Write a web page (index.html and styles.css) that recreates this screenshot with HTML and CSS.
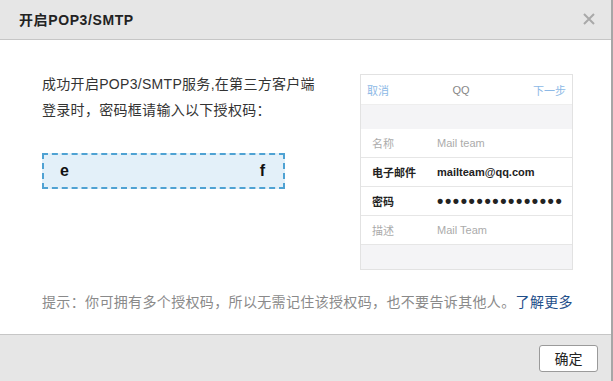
FILE: index.html
```
<!DOCTYPE html>
<html lang="zh-CN">
<head>
    <meta charset="UTF-8" />
    <meta name="viewport" content="width=device-width, initial-scale=1.0" />
    <title>开启POP3/SMTP</title>
    <link rel="stylesheet" href="styles.css">
</head>
<body>
    <div class="dialog">
        <div class="dialog-header">
            <span class="dialog-title">开启POP3/SMTP</span>
            <button class="close-btn" aria-label="关闭">
                <svg width="12" height="12" viewBox="0 0 12 12">
                    <path d="M1 1 L11 11 M11 1 L1 11" stroke="#a9a9a9" stroke-width="2" fill="none" />
                </svg>
            </button>
        </div>

        <div class="dialog-body">
            <div class="content">
                <div class="intro">
                    <p class="intro-text">成功开启POP3/SMTP服务,在第三方客户端<br>登录时，密码框请输入以下授权码：</p>
                    <div class="auth-code">
                        <span>e</span>
                        <span>f</span>
                    </div>
                </div>

                <!-- 客户端示意图 -->
                <div class="phone">
                    <div class="phone-nav">
                        <span class="nav-link">取消</span>
                        <span class="nav-title">QQ</span>
                        <span class="nav-link">下一步</span>
                    </div>
                    <div class="phone-gap"></div>
                    <div class="phone-row muted">
                        <span class="row-label">名称</span>
                        <span>Mail team</span>
                    </div>
                    <div class="phone-row strong">
                        <span class="row-label">电子邮件</span>
                        <span>mailteam@qq.com</span>
                    </div>
                    <div class="phone-row strong">
                        <span class="row-label">密码</span>
                        <span class="dots">••••••••••••••••</span>
                    </div>
                    <div class="phone-row muted">
                        <span class="row-label">描述</span>
                        <span>Mail Team</span>
                    </div>
                    <div class="phone-gap"></div>
                </div>
            </div>

            <p class="tip">提示：你可拥有多个授权码，所以无需记住该授权码，也不要告诉其他人。<a href="#">了解更多</a></p>
        </div>

        <div class="dialog-footer">
            <button class="ok-btn">确定</button>
        </div>
    </div>
</body>
</html>
```

FILE: styles.css
```
*, *::before, *::after {
    box-sizing: border-box;
    margin: 0;
    padding: 0;
}

body {
    background: #FFFFFF;
    font-family: "Liberation Sans", "Noto Sans CJK SC", sans-serif;
    color: #333333;
}

.dialog {
    width: 613px;
    height: 381px;
    display: flex;
    flex-direction: column;
    border-right: 2px solid #A6A6A6;
}

/* 标题栏 */
.dialog-header {
    height: 40px;
    flex-shrink: 0;
    display: flex;
    align-items: center;
    justify-content: space-between;
    padding: 0 14px 2px 19px;
    background: #E6E6E6;
    border-bottom: 1px solid #C6C6C6;
}

.dialog-title {
    font-size: 14px;
    font-weight: 700;
    letter-spacing: 0.6px;
    color: #222222;
}

.close-btn {
    border: none;
    background: none;
    width: 16px;
    height: 16px;
    display: flex;
    align-items: center;
    justify-content: center;
    cursor: pointer;
}

/* 内容区 */
.dialog-body {
    flex: 1;
    padding: 34px 38px 0 42px;
}

.content {
    display: flex;
    justify-content: space-between;
}

.intro-text {
    margin-top: -3px;
    font-size: 14px;
    line-height: 26px;
    letter-spacing: 0.3px;
    color: #333333;
}

.auth-code {
    width: 243px;
    height: 36px;
    margin-top: 30px;
    display: flex;
    align-items: center;
    justify-content: space-between;
    padding: 0 18px 0 16px;
    background: #E3F0F9;
    border: 2px dashed #4FA2D3;
    font-size: 16px;
    font-weight: 700;
    color: #111111;
}

/* 手机示意图 */
.phone {
    width: 213px;
    border: 1px solid #E2E2E2;
    background: #FFFFFF;
    font-size: 11px;
}

.phone-nav {
    height: 30px;
    display: flex;
    align-items: center;
    justify-content: space-between;
    padding: 0 6px 0 6px;
    border-bottom: 1px solid #EEEEEE;
}

.nav-link {
    color: #8DB9E6;
}

.nav-title {
    color: #888888;
}

.phone-gap {
    height: 24px;
    background: #F4F4F6;
}

.phone-row {
    height: 29px;
    display: flex;
    align-items: center;
    padding-left: 11px;
    border-bottom: 1px solid #E6E6E6;
}

    .phone-row:last-of-type {
        border-bottom: none;
    }

.row-label {
    width: 65px;
}

.phone-row.muted {
    color: #ABABAB;
}

.phone-row.strong {
    color: #222222;
    font-weight: 700;
}

.dots {
    font-size: 18px;
    line-height: 1;
    letter-spacing: 1.6px;
}

.tip {
    margin-top: 22px;
    font-size: 14px;
    line-height: 20px;
    letter-spacing: 0.35px;
    color: #8A8A8A;
    white-space: nowrap;
}

    .tip a {
        color: #1F4F8A;
        text-decoration: none;
    }

/* 底栏 */
.dialog-footer {
    height: 47px;
    flex-shrink: 0;
    display: flex;
    align-items: center;
    justify-content: flex-end;
    padding-right: 13px;
    background: #E6E6E6;
    border-top: 1px solid #C6C6C6;
}

.ok-btn {
    width: 59px;
    height: 27px;
    background: #FFFFFF;
    border: 1px solid #9A9A9A;
    border-radius: 3px;
    font-family: "Liberation Sans", "Noto Sans CJK SC", sans-serif;
    font-size: 14px;
    color: #222222;
    cursor: pointer;
}
```
